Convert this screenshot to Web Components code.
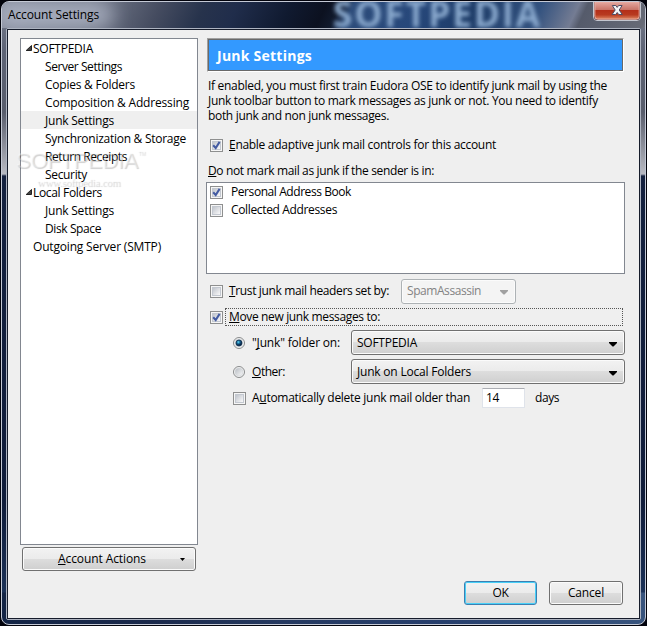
<!DOCTYPE html>
<html lang="en">
<head>
<meta charset="utf-8">
<title>Account Settings</title>
<style>
html,body{margin:0;height:100%;overflow:hidden}
body{font:12px/16px "Open Sans","Noto Sans",sans-serif;color:#000;background:#02030c}
</style>
</head>
<body>
<account-window></account-window>
<script>
const define=(name,css,html,setup)=>{
  customElements.define(name,class extends HTMLElement{
    connectedCallback(){
      if(this.shadowRoot)return;
      const r=this.attachShadow({mode:'open'});
      r.innerHTML=`<style>*{box-sizing:border-box}${css}</style>${html}`;
      if(setup)setup(this,r);
    }
  });
};

/* A single-line label spaced to an exact width; "key" is the index of the access key letter. */
define('ui-label',`:host{display:inline-block;white-space:pre;line-height:16px;flex:none}
u{text-decoration:underline;text-decoration-thickness:1px;text-underline-offset:1px;text-decoration-skip-ink:none}`,`<span></span>`,(h,r)=>{
  const s=r.querySelector('span'),t=h.getAttribute('text'),k=h.getAttribute('key');
  if(k===null)s.textContent=t;
  else{const i=+k,u=document.createElement('u');u.textContent=t[i];s.append(t.slice(0,i),u,t.slice(i+1));}
  const w=+h.getAttribute('w');
  if(w){s.style.letterSpacing=((w-s.getBoundingClientRect().width)/t.length)+'px';h.style.width=w+'px';}
});

define('tree-row',`:host{display:flex;align-items:center;height:18px;padding-left:12px}
:host([child]){padding-left:24px}
:host([selected]){background:#efefef}
:host([open]){padding-left:4px}
::slotted(ui-label){margin-top:2px}
svg{display:none;width:8px;height:8px;flex:none}
:host([open]) svg{display:block}`,`<svg viewBox="0 0 8 8"><path d="M6.5 1.5V6.5H1.2Z" fill="#444" stroke="#222" stroke-width="1"/></svg><slot></slot>`);

define('check-box',`:host{display:block;flex:none;width:13px;height:13px}svg{display:block}path{display:none}:host([checked]) path{display:block}`,
`<svg width="13" height="13"><defs><linearGradient id="g" x1="0" y1="0" x2="1" y2="1"><stop offset=".1" stop-color="#c3c7ce"/><stop offset=".9" stop-color="#f7f7f8"/></linearGradient></defs><rect x=".5" y=".5" width="12" height="12" fill="#f6f6f6" stroke="#8e8f8f"/><rect x="2.5" y="2.5" width="8" height="8" fill="url(#g)" stroke="#c3c8d0"/><path d="M3.2 6.3 5.7 9 9.6 2.9" fill="none" stroke="#435ba2" stroke-width="2"/></svg>`);

define('radio-dot',`:host{display:block;flex:none;width:12px;height:12px}svg{display:block}.d{display:none}:host([checked]) .d{display:block}`,
`<svg width="12" height="12"><defs><linearGradient id="g" x1="0" y1="0" x2="1" y2="1"><stop stop-color="#b5bac1"/><stop offset="1" stop-color="#fafafa"/></linearGradient><radialGradient id="b" cx=".4" cy=".35"><stop stop-color="#6bdcf5"/><stop offset=".45" stop-color="#1d78a8"/><stop offset="1" stop-color="#0b2445"/></radialGradient></defs><circle cx="6" cy="6" r="5.5" fill="#f5f5f5" stroke="#898b8c"/><circle cx="6" cy="6" r="4" fill="url(#g)" stroke="#d0d3d7" stroke-width=".6"/><circle class="d" cx="6" cy="6" r="3" fill="url(#b)" stroke="#0d3152" stroke-width=".8"/></svg>`);

define('push-button',`:host{display:flex;align-items:center;justify-content:center;border:1px solid #707070;border-radius:3px;flex:none;
box-shadow:inset 0 0 0 1px #fbfbfb;background:linear-gradient(#f2f2f2,#ebebeb 49%,#dddddd 50%,#cfcfcf)}
:host([primary]){border-color:#3c7fb1;box-shadow:inset 0 0 0 1px #48d0f8}`,`<slot></slot>`);

define('select-box',`:host{display:flex;align-items:center;justify-content:space-between;height:25px;border:1px solid #707070;border-radius:3px;padding:0 7px 0 5px;flex:none;
box-shadow:inset 0 0 0 1px #fbfbfb;background:linear-gradient(#f2f2f2,#ebebeb 49%,#dddddd 50%,#cfcfcf)}
:host([disabled]){background:#f4f4f4;border-color:#adb2b5;color:#838383}
svg{margin-top:3px}:host([disabled]) svg{color:#a0a0a0}`,`<slot></slot><svg width="8" height="5" fill="currentColor"><path d="M0 0H8V1L4.5 4.5H3.5L0 1Z"/></svg>`);

define('form-row',`:host{display:flex;align-items:center;height:18px}`,`<slot></slot>`);

define('close-button',`:host{display:block;position:absolute;right:4px;top:0;width:48px;height:20px}svg{display:block}`,
`<svg width="48" height="20"><defs><linearGradient id="r" x2="0" y2="1"><stop stop-color="#e6aaa2"/><stop offset=".45" stop-color="#c97569"/><stop offset=".46" stop-color="#b32d18"/><stop offset=".75" stop-color="#b83a20"/><stop offset="1" stop-color="#de8763"/></linearGradient></defs><path d="M.5 0V15Q.5 18.5 4 18.5H44Q47.5 18.5 47.5 15V0" fill="#431f25" stroke="#c3c6cf"/><path d="M1.8 -.3H46.2V14.5Q46.2 17.2 43.5 17.2H4.5Q1.8 17.2 1.8 14.5Z" fill="url(#r)" stroke="#efb7ad"/><path d="M19.3 3.5H22.8L24.2 5.4 25.6 3.5H29.1L26.2 8 29.3 12.5H25.7L24.2 10.5 22.7 12.5H19.1L22.2 8Z" fill="#f4f5f7" stroke="#4d4c64" stroke-width="1"/></svg>`);

define('title-bar',`:host{display:block;position:relative;height:26px;overflow:hidden;border-radius:6px 6px 0 0;
background:linear-gradient(115deg,#858b9c 0,#777d8d 80px,#454c60 145px,#27334c 185px,#202d4b 215px,#101a30 263px,#0c1120 295px,#111a2d 308px,#2d4c7a 320px,#27487b 380px,#1e3c68 430px,#33527f 490px,#747c93 524px,#555b6b 532px,#666a76 590px,#737783)}
.glow{position:absolute;left:-6px;top:0;width:118px;height:26px;border-radius:14px;background:#c3cada99;filter:blur(9px)}
.name{position:absolute;left:6px;top:5px}
.blur{position:absolute;left:331px;top:-2px;color:#8cabcf;filter:blur(2px);font:bold 35px/28px "Open Sans",sans-serif}`,
`<div class="glow"></div><div class="blur"><ui-label text="SOFTPEDIA" w="209" style="line-height:28px"></ui-label></div><div class="name"><ui-label text="Account Settings" w="91"></ui-label></div><close-button></close-button>`);

define('water-mark',`:host{position:absolute;left:14px;top:145px;width:140px;height:44px;pointer-events:none;color:#ffffff59;text-shadow:1px 1px 1px #00000030}
:host{font-family:"Liberation Sans",sans-serif}
.a{font-size:22px;line-height:27px;height:30px}.b{font:11px/12px "Liberation Serif",serif;padding-left:21px;margin-top:-1px}
sup{position:absolute;font-size:5px;left:122px;top:-7px}`,`<div class="a"><ui-label text="SOFTPEDIA" w="122" style="line-height:27px"></ui-label><sup>TM</sup></div><div class="b"><ui-label text="www.softpedia.com" w="83" style="line-height:12px"></ui-label></div>`);

define('account-tree',`:host{display:block;width:178px;height:507px;border:1px solid #828790;background:#fff}`,
`<tree-row open><ui-label text="SOFTPEDIA" w="60"></ui-label></tree-row>
<tree-row child><ui-label text="Server Settings" w="77"></ui-label></tree-row>
<tree-row child><ui-label text="Copies &amp; Folders" w="90"></ui-label></tree-row>
<tree-row child><ui-label text="Composition &amp; Addressing" w="144"></ui-label></tree-row>
<tree-row child selected><ui-label text="Junk Settings" w="69"></ui-label></tree-row>
<tree-row child><ui-label text="Synchronization &amp; Storage" w="141"></ui-label></tree-row>
<tree-row child><ui-label text="Return Receipts" w="82"></ui-label></tree-row>
<tree-row child><ui-label text="Security" w="42"></ui-label></tree-row>
<tree-row open><ui-label text="Local Folders" w="69"></ui-label></tree-row>
<tree-row child><ui-label text="Junk Settings" w="69"></ui-label></tree-row>
<tree-row child><ui-label text="Disk Space" w="56"></ui-label></tree-row>
<tree-row><ui-label text="Outgoing Server (SMTP)" w="128"></ui-label></tree-row>`);

define('junk-panel',`:host{display:block;width:419px}
header{margin-left:1px;width:417px;height:34px;border:1px solid;border-color:#a0a0a0 #fff #fff #a0a0a0}
header>div{height:32px;border:1px solid #696969;background:#39f;color:#fff;font:bold 14px/30px "Open Sans",sans-serif;padding:1px 0 0 8px}
header ui-label{line-height:30px}
.intro{margin:6px 0 0 2px;display:grid;grid-auto-rows:15px;height:46px}
.list{height:92px;border:1px solid #828790;background:#fff;margin-top:2px}
.list form-row{gap:8px;padding-left:3px}
.r1,.r2,.r3{gap:6px;padding-left:4px}
.r2{height:26px;margin-top:4px}
.r2 select-box{margin-left:6px}
.r3{height:26px;gap:0;margin-bottom:-2px}
.focus{margin-left:2px;width:398px;height:18px;border:1px dotted #555;padding-left:3px;line-height:14px}
.focus ui-label{line-height:16px}
.r4{height:29px;padding-left:27px}
.r4 ui-label.n{margin-left:7px}.r4 select-box{margin-left:auto;width:274px}`,
`<header><div><ui-label text="Junk Settings" w="95"></ui-label></div></header>
<div class="intro"><ui-label text="If enabled, you must first train Eudora OSE to identify junk mail by using the" w="399"></ui-label><ui-label text="Junk toolbar button to mark messages as junk or not. You need to identify" w="390"></ui-label><ui-label text="both junk and non junk messages." w="181"></ui-label></div>
<form-row class="r1" style="margin-top:12px"><check-box checked></check-box><ui-label key="0" text="Enable adaptive junk mail controls for this account" w="267"></ui-label></form-row>
<form-row style="margin-top:8px;padding-left:2px"><ui-label key="0" text="Do not mark mail as junk if the sender is in:" w="226"></ui-label></form-row>
<div class="list"><form-row><check-box checked></check-box><ui-label text="Personal Address Book" w="120"></ui-label></form-row><form-row><check-box></check-box><ui-label text="Collected Addresses" w="106"></ui-label></form-row></div>
<form-row class="r2"><check-box></check-box><ui-label key="0" text="Trust junk mail headers set by:" w="160"></ui-label><select-box disabled style="width:115px"><ui-label text="SpamAssassin" w="74"></ui-label></select-box></form-row>
<form-row class="r3"><check-box checked></check-box><div class="focus"><ui-label key="0" text="Move new junk messages to:" w="151"></ui-label></div></form-row>
<form-row class="r4"><radio-dot checked></radio-dot><ui-label class="n" key="1" text="&quot;Junk&quot; folder on:" w="88"></ui-label><select-box><ui-label text="SOFTPEDIA" w="60"></ui-label></select-box></form-row>
<form-row class="r4"><radio-dot></radio-dot><ui-label class="n" key="0" text="Other:" w="33"></ui-label><select-box><ui-label text="Junk on Local Folders" w="114"></ui-label></select-box></form-row>
<form-row style="height:24px;padding-left:27px"><check-box></check-box><ui-label style="margin-left:6px" key="1" text="Automatically delete junk mail older than" w="218"></ui-label><number-field><ui-label text="14" w="13"></ui-label></number-field><ui-label style="margin-left:10px" text="days" w="24"></ui-label></form-row>`);

define('number-field',`:host{display:flex;align-items:center;width:43px;height:20px;border:1px solid #dfe3ea;border-top-color:#abadb3;background:#fff;padding-left:3px;margin-left:12px;flex:none;border-radius:1px}`,`<slot></slot>`);

define('account-window',`:host{display:block;height:100%;padding:1px}
.frame{position:relative;width:645px;height:624px;border:1px solid #c4c9d5;border-radius:8px;
background:linear-gradient(#777d8e 0,#5d6375 50px,#585d6c 110px,#b8bac2 172px,#14213f 174px,#101c3a 500px,#1b3157 590px,transparent 591px),linear-gradient(90deg,#132445,#1a294b 150px,#253960 280px,#263e6c 440px,#38547d)}
.client{margin:0 0 0 4px;width:635px;height:592px;border:1px solid #aeb4c1;border-radius:2px;padding:0}
.body{border:1px solid #161c2b;height:590px;background:#efefef;padding:8px 0 0 12px}
.cols{display:flex;gap:8px;height:507px}
.foot{display:flex;align-items:flex-start;height:60px}`,
`<div class="frame"><title-bar></title-bar>
<div class="client"><div class="body"><div class="cols"><account-tree></account-tree><junk-panel></junk-panel></div>
<div class="foot"><push-button style="width:174px;height:24px;margin:2px 0 0 2px;padding:0 0 0 35px;justify-content:flex-start"><ui-label key="0" text="Account Actions" w="88"></ui-label><svg width="5" height="3" style="margin-left:34px"><path d="M0 0H5L2.5 3Z"/></svg></push-button>
<push-button primary style="width:73px;height:24px;margin:36px 0 0 268px"><ui-label text="OK" w="16"></ui-label></push-button>
<push-button style="width:74px;height:24px;margin:36px 0 0 12px"><ui-label text="Cancel" w="36"></ui-label></push-button></div></div></div>
<water-mark></water-mark></div>`);
</script>
</body>
</html>
